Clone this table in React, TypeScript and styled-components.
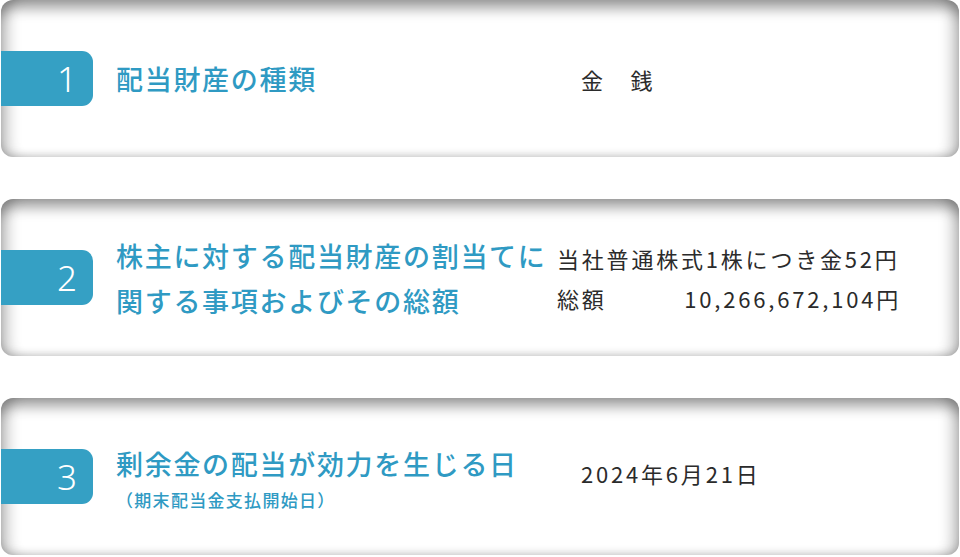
import styled, { createGlobalStyle } from "styled-components";

const GlobalStyle = createGlobalStyle`
  html, body {
    margin: 0;
    padding: 0;
    background: #ffffff;
  }
  body {
    font-family: "Noto Sans CJK JP", "Noto Sans", sans-serif;
  }
`;

const Page = styled.div`
  width: 960px;
  height: 557px;
  display: flex;
  flex-direction: column;
  gap: 42px;
  padding: 0 1px 0 1px;
  box-sizing: border-box;
`;

const Card = styled.div`
  height: 157px;
  background: #ffffff;
  border-radius: 12px;
  display: grid;
  grid-template-columns: 92px 464px 1fr;
  align-items: center;
  box-shadow:
    inset 0 14px 14px -6px rgba(0, 0, 0, 0.4),
    inset 16px 0 14px -9px rgba(0, 0, 0, 0.24),
    inset -16px 0 14px -9px rgba(0, 0, 0, 0.24),
    inset 0 -8px 8px -6px rgba(0, 0, 0, 0.18);
`;

const Badge = styled.div`
  height: 55px;
  background: #35a0c4;
  border-radius: 0 11px 11px 0;
  display: flex;
  align-items: center;
  justify-content: center;
  padding-left: 40px;
  box-sizing: border-box;
  color: #ffffff;
  font-family: "Noto Sans", sans-serif;
  font-weight: 300;
  font-size: 35px;
  line-height: 1;
`;

const TitleBox = styled.div`
  padding-left: 23px;
  display: flex;
  flex-direction: column;
`;

const Title = styled.div`
  color: #2f9ac3;
  font-size: 27px;
  font-weight: 500;
  letter-spacing: 1.7px;
  line-height: 45px;
  white-space: nowrap;
`;

const SubTitle = styled.div`
  color: #2f9ac3;
  font-size: 17px;
  font-weight: 500;
  letter-spacing: 1.3px;
  line-height: 24px;
  margin-top: 2px;
`;

const Value = styled.div<{ $indent?: number; $lift?: number }>`
  padding-left: ${(p) => p.$indent ?? 0}px;
  margin-top: ${(p) => -(p.$lift ?? 0)}px;
  color: #2b2b2b;
  font-size: 22px;
  letter-spacing: 2.8px;
  line-height: 40px;
  display: flex;
  flex-direction: column;
`;

const ValueRow = styled.div`
  display: flex;
  width: 344px;
  justify-content: space-between;
  white-space: nowrap;
`;

const App = () => {
  return (
    <>
      <GlobalStyle />
      <Page>
        <Card>
          <Badge>1</Badge>
          <TitleBox>
            <Title>配当財産の種類</Title>
          </TitleBox>
          <Value $indent={24}>金　銭</Value>
        </Card>

        <Card>
          <Badge>2</Badge>
          <TitleBox>
            <Title>
              株主に対する配当財産の割当てに
              <br />
              関する事項およびその総額
            </Title>
          </TitleBox>
          <Value>
            <ValueRow>当社普通株式1株につき金52円</ValueRow>
            <ValueRow>
              <span>総額</span>
              <span>10,266,672,104円</span>
            </ValueRow>
          </Value>
        </Card>

        <Card>
          <Badge>3</Badge>
          <TitleBox>
            <Title>剰余金の配当が効力を生じる日</Title>
            <SubTitle>（期末配当金支払開始日）</SubTitle>
          </TitleBox>
          <Value $indent={24} $lift={8}>2024年6月21日</Value>
        </Card>
      </Page>
    </>
  );
};

export default App;
